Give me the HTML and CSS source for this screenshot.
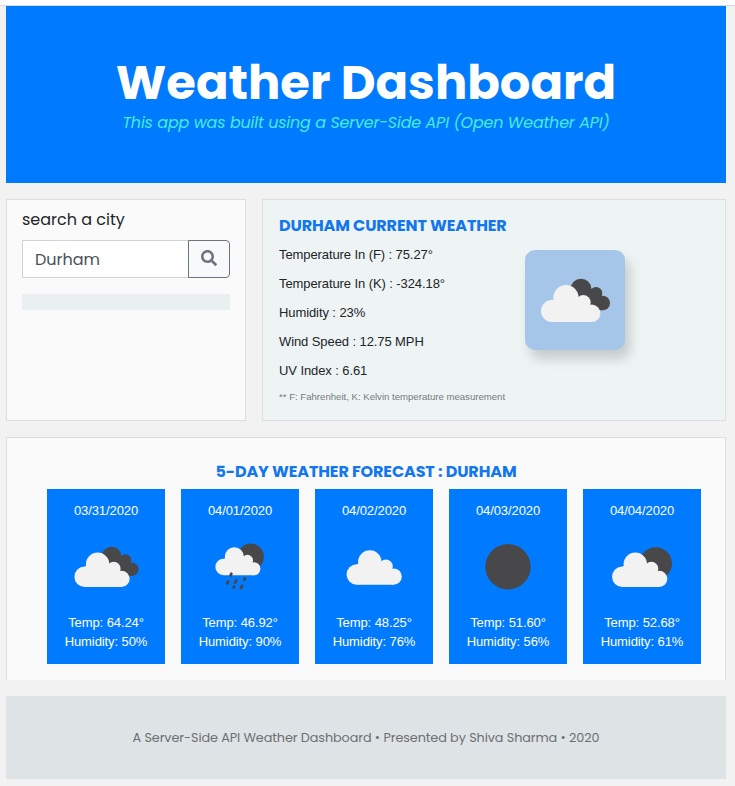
FILE: index.html
```html
<!DOCTYPE html>
<html lang="en">
<head>
<meta charset="utf-8">
<title>Weather Dashboard</title>
<link rel="stylesheet" href="styles.css">
</head>
<body>
<svg class="defs" width="0" height="0" aria-hidden="true">
  <defs>
    <g id="cloud">
      <circle cx="27" cy="61" r="11"/><circle cx="41" cy="47.6" r="12.6"/><circle cx="58.3" cy="52.4" r="7.4"/><circle cx="66.7" cy="63.3" r="8.7"/>
      <path d="M27 50L41 47L58 52L66.7 63V72H27Z"/>
    </g>
    <g id="backcloud">
      <circle cx="56" cy="39.2" r="10.5"/><circle cx="71" cy="43.2" r="6.3"/><circle cx="77.7" cy="53" r="7.3"/>
      <path d="M56 39L71 41L78 53V60.3H66L48 46Z"/>
    </g>
  </defs>
</svg>
<div class="topbar"></div>
<main class="page">
  <header class="banner">
    <h1>Weather Dashboard</h1>
    <p>This app was built using a Server-Side API (Open Weather API)</p>
  </header>
  <div class="row">
    <section class="panel search">
      <label for="city">search a city</label>
      <div class="input-group">
        <input id="city" type="text" value="Durham">
        <button type="button" aria-label="Search"><svg width="16" height="16" viewBox="0 0 512 512"><path fill="currentColor" d="M505 442.700L405.300 343c-4.500-4.500-10.600-7-17-7H372c27.600-35.300 44-79.700 44-128C416 93.100 322.900 0 208 0S0 93.100 0 208s93.100 208 208 208c48.300 0 92.700-16.400 128-44v16.300c0 6.400 2.500 12.500 7 17l99.700 99.700c9.400 9.400 24.600 9.400 33.900 0l28.300-28.300c9.400-9.400 9.400-24.600.1-34zM208 336c-70.700 0-128-57.200-128-128 0-70.700 57.200-128 128-128 70.700 0 128 57.200 128 128 0 70.700-57.200 128-128 128z"/></svg></button>
      </div>
      <div class="history"></div>
    </section>
    <section class="panel current">
      <div class="details">
        <h2>DURHAM CURRENT WEATHER</h2>
        <p>Temperature In (F) : 75.27°</p>
        <p>Temperature In (K) : -324.18°</p>
        <p>Humidity : 23%</p>
        <p>Wind Speed : 12.75 MPH</p>
        <p>UV Index : 6.61</p>
        <small>** F: Fahrenheit, K: Kelvin temperature measurement</small>
      </div>
      <svg class="now" viewBox="0 0 100 100"><use href="#backcloud" class="dark"/><use href="#cloud" class="light"/></svg>
    </section>
  </div>
  <section class="panel forecast">
    <h2>5-DAY WEATHER FORECAST : DURHAM</h2>
    <div class="cards">
      <article class="card"><h3>03/31/2020</h3>
        <svg viewBox="0 0 100 100"><use href="#backcloud" class="dark"/><use href="#cloud" class="light"/></svg>
        <p>Temp: 64.24°</p><p>Humidity: 50%</p></article>
      <article class="card"><h3>04/01/2020</h3>
        <svg viewBox="0 0 100 100"><circle class="dark" cx="61.500" cy="39.500" r="14.200"/><use href="#cloud" class="light" transform="translate(10.500 .8) scale(.815)"/><path class="drops" d="M40.700 57.800l-.8 1.800M37.400 66l-1.200 2.200M46 65l-1.200 2.200M55.200 62.800l-.6 1.400M43.600 71.600l-.5 1M52.200 71l-1.200 2.200"/></svg>
        <p>Temp: 46.92°</p><p>Humidity: 90%</p></article>
      <article class="card"><h3>04/02/2020</h3>
        <svg viewBox="0 0 100 100"><use href="#cloud" class="light" transform="translate(4.500 -2.500)"/></svg>
        <p>Temp: 48.25°</p><p>Humidity: 76%</p></article>
      <article class="card"><h3>04/03/2020</h3>
        <svg viewBox="0 0 100 100"><circle class="dark" cx="50" cy="50.300" r="24.400"/></svg>
        <p>Temp: 51.60°</p><p>Humidity: 56%</p></article>
      <article class="card"><h3>04/04/2020</h3>
        <svg viewBox="0 0 100 100"><circle class="dark" cx="64.700" cy="46.700" r="17.500"/><use href="#cloud" class="light" transform="translate(1.800 0)"/></svg>
        <p>Temp: 52.68°</p><p>Humidity: 61%</p></article>
    </div>
  </section>
  <footer>A Server-Side API Weather Dashboard • Presented by Shiva Sharma • 2020</footer>
</main>
</body>
</html>
```
FILE: styles.css
```css
* { box-sizing: border-box; }
body { margin: 0; background: #f2f2f2; color: #212529; font-family: Poppins, Inter, sans-serif; }
h1, h2, h3, p { margin: 0; }
.defs { position: absolute; }
.topbar { height: 6px; background: #fff; border-bottom: 1px solid #d5d8dc; }
.page { width: 720px; margin-left: 6px; display: flex; flex-direction: column; gap: 16px; }
.banner { height: 177px; padding-top: 48px; background: #007bff; text-align: center; white-space: nowrap; }
.banner h1 { color: #fff; font-size: 48px; line-height: 57px; font-weight: 700; }
.banner p { color: #44ecdc; font-size: 16px; line-height: 24px; font-style: italic; letter-spacing: -.21px; }
.row { display: flex; gap: 16px; height: 222px; }
.panel { background: #fafafa; border: 1px solid #dcdfe0; }
.search { width: 240px; padding: 8px 15px; }
.search label { display: block; font-size: 16px; line-height: 24px; margin-bottom: 8px; }
.input-group { display: flex; height: 38px; }
.input-group input { width: 167px; border: 1px solid #ced4da; border-right: 0; padding: 0 12px; background: #fff; color: #495057; font: 16px Poppins, Inter, sans-serif; }
.input-group button { flex: 1; display: flex; align-items: center; justify-content: center; border: 1px solid #6c757d; border-radius: 0 4px 4px 0; background: #f8f9fa; color: #6c757d; padding: 0 0 2px; margin-left: -1px; }
.history { height: 16px; margin-top: 16px; background: #eaeff1; }
.current { width: 464px; padding: 16px; display: flex; background: #eef4f4; }
.details { width: 246px; white-space: nowrap; font-family: "Liberation Sans", Arial, sans-serif; }
h2 { color: #1277ee; font: 700 16px/19px Poppins, Inter, sans-serif; letter-spacing: -.12px; }
.details p { font-size: 13px; line-height: 19px; margin-bottom: 10px; letter-spacing: -.09px; }
.details h2 { margin-bottom: 10px; }
.details small { display: block; font-size: 9.600px; line-height: 14px; color: #747b80; }
.now { width: 100px; height: 100px; margin-top: 34px; border-radius: 10px; background: #a5c6e9; box-shadow: 5px 9px 12px rgba(0,0,0,.17); }
.dark { fill: #48484a; }
.light { fill: #f2f2f2; }
.drops { fill: none; stroke: #48484a; stroke-width: 3; stroke-linecap: round; }
.forecast { height: 243px; border-bottom: 0; padding: 24px 24px 16px 40px; }
.forecast h2 { text-align: center; margin: 0 16px 8px 0; white-space: nowrap; }
.cards { display: flex; gap: 16px; }
.card { width: 118px; height: 175px; padding: 12px; background: #007bff; color: #fff; text-align: center; font: 13px/19px "Liberation Sans", Arial, sans-serif; letter-spacing: -.09px; }
.card h3 { font-size: 13px; line-height: 19px; font-weight: 400; }
.card svg { display: block; width: 94px; height: 93px; }
footer { height: 83px; background: #dee3e5; color: #6c7074; font-size: 12.800px; line-height: 83px; letter-spacing: -.085px; text-align: center; white-space: nowrap; }
```
